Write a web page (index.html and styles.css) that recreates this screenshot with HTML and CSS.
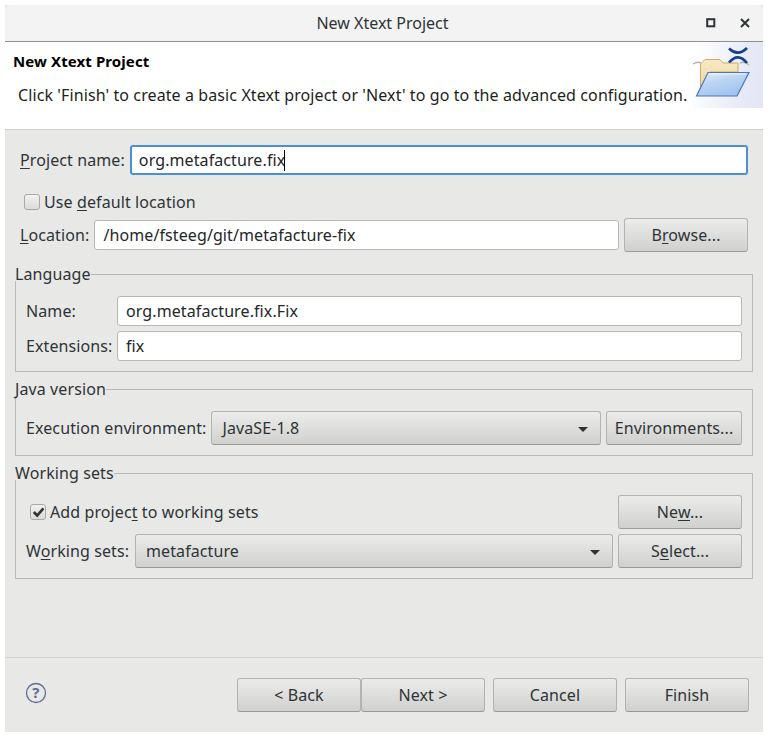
FILE: index.html
```html
<!DOCTYPE html>
<html lang="en">
<head>
    <meta charset="UTF-8">
    <meta name="viewport" content="width=device-width, initial-scale=1.0">
    <title>New Xtext Project</title>
    <link rel="stylesheet" href="styles.css">
</head>
<body>
    <div class="window">
        <div class="titlebar">
            <span class="title">New Xtext Project</span>
            <div class="window-buttons">
                <svg width="10" height="10" viewBox="0 0 10 10"><rect x="1.2" y="1.2" width="7.1" height="7.1" fill="none" stroke="#2e3436" stroke-width="2"/></svg>
                <svg width="10" height="10" viewBox="0 0 10 10"><path d="M1 1L9 9M9 1L1 9" fill="none" stroke="#2e3436" stroke-width="2"/></svg>
            </div>
        </div>

        <div class="banner">
            <div class="banner-text">
                <h1>New Xtext Project</h1>
                <p>Click 'Finish' to create a basic Xtext project or 'Next' to go to the advanced configuration.</p>
            </div>
            <div class="banner-image">
                <svg width="70" height="65" viewBox="0 0 70 65">
                    <defs>
                        <linearGradient id="back" x1="0" y1="0" x2="0" y2="1">
                            <stop offset="0" stop-color="#f7e9c4"/>
                            <stop offset="1" stop-color="#ecd595"/>
                        </linearGradient>
                        <linearGradient id="front" x1="0" y1="0" x2="0.6" y2="1">
                            <stop offset="0" stop-color="#e6effb"/>
                            <stop offset="0.45" stop-color="#bdd5f4"/>
                            <stop offset="1" stop-color="#a0c2ee"/>
                        </linearGradient>
                    </defs>
                    <path d="M0 22Q4 19 8 21M47 21Q52 19 56 23" fill="none" stroke="#b4b4b8" stroke-width="1.4"/>
                    <path d="M7.5 52V22L12 17.5H27L30 21H45V30H17Z" fill="url(#back)" stroke="#c9ad6a"/>
                    <path d="M15 30.500H56L44 54H3.500Z" fill="url(#front)" stroke="#5074b8" stroke-width="1.200"/>
                    <path d="M16 32H53" fill="none" stroke="#fff" stroke-opacity="0.8"/>
                    <path d="M36 6.500Q45 15 54 6M36 20.500Q45 10 54 21" fill="none" stroke="#16408e" stroke-width="2.600"/>
                </svg>
            </div>
        </div>

        <div class="content">
            <div class="row project-row">
                <label class="label"><u>P</u>roject name:</label>
                <div class="field focused">org.metafacture.fix<span class="caret"></span></div>
            </div>

            <label class="check default-location"><span class="box"></span><span>Use <u>d</u>efault location</span></label>

            <div class="row location-row">
                <label class="label"><u>L</u>ocation:</label>
                <div class="field">/home/fsteeg/git/metafacture-fix</div>
                <button class="btn">B<u>r</u>owse...</button>
            </div>

            <fieldset class="group language">
                <legend>Language</legend>
                <div class="row">
                    <label class="label name-label">Name:</label>
                    <div class="field">org.metafacture.fix.Fix</div>
                </div>
                <div class="row">
                    <label class="label name-label">Extensions:</label>
                    <div class="field">fix</div>
                </div>
            </fieldset>

            <fieldset class="group java">
                <legend>Java version</legend>
                <div class="row">
                    <label class="label">Execution environment:</label>
                    <div class="combo">JavaSE-1.8<span class="arrow"></span></div>
                    <button class="btn env">Environments...</button>
                </div>
            </fieldset>

            <fieldset class="group working">
                <legend>Working sets</legend>
                <div class="row add-row">
                    <label class="check"><span class="box">
                        <svg width="14" height="14" viewBox="0 0 14 14"><path d="M2.800 7L6.200 10.500L12.400 3.300" fill="none" stroke="#2e3436" stroke-width="2.600"/></svg>
                    </span><span>Add projec<u>t</u> to working sets</span></label>
                    <button class="btn">Ne<u>w</u>...</button>
                </div>
                <div class="row">
                    <label class="label sets-label">W<u>o</u>rking sets:</label>
                    <div class="combo">metafacture<span class="arrow"></span></div>
                    <button class="btn">S<u>e</u>lect...</button>
                </div>
            </fieldset>
        </div>

        <div class="footer">
            <svg class="help" width="22" height="22" viewBox="0 0 22 22">
                <circle cx="11" cy="11" r="9.500" fill="none" stroke="#5c6f94" stroke-width="1.300"/>
                <text x="11" y="16" text-anchor="middle" class="help-mark">?</text>
            </svg>
            <div class="nav">
                <button class="btn">&lt; Back</button>
                <button class="btn">Next &gt;</button>
                <button class="btn cancel">Cancel</button>
                <button class="btn finish">Finish</button>
            </div>
        </div>
    </div>
</body>
</html>
```

FILE: styles.css
```css
* {
    box-sizing: border-box;
}
html, body {
    height: 100%;
}
body {
    margin: 0;
    background-color: #fff;
    font-family: "Noto Sans", sans-serif;
    font-size: 16px;
    letter-spacing: 0.1px;
    color: #2e3436;
    overflow: hidden;
}
u {
    text-underline-offset: 2px;
    text-decoration-thickness: 1px;
}
.window {
    margin: 5px 0 0 5px;
    width: 758px;
    height: 727px;
    background-color: #e8e8e7;
    display: flex;
    flex-direction: column;
}

/* title bar */
.titlebar {
    height: 37px;
    flex: none;
    position: relative;
    display: flex;
    align-items: center;
    justify-content: center;
    padding-right: 3px;
    letter-spacing: 0;
    background-color: #f3f3f3;
    border-bottom: 1px solid #8f8f8c;
    border-radius: 6px 6px 0 0;
}
.window-buttons {
    position: absolute;
    right: 13px;
    top: 13px;
    display: flex;
    gap: 24px;
}
.window-buttons svg {
    display: block;
}

/* white banner */
.banner {
    height: 88px;
    flex: none;
    background-color: #fff;
    border-bottom: 1px solid #cfcfcd;
    display: flex;
    justify-content: space-between;
}
.banner-text {
    padding: 9px 0 0 8px;
}
.banner h1 {
    margin: 0;
    font-size: 15px;
    line-height: 20px;
    font-weight: 700;
    color: #000;
}
.banner p {
    margin: 14px 0 0 5px;
    line-height: 20px;
    color: #1c1f20;
    white-space: nowrap;
}
.banner-image {
    width: 70px;
    height: 66px;
    background: linear-gradient(100deg, #fff 5%, #e6e9f6 75%, #e2e6f5 100%);
}
.banner-image svg {
    display: block;
}

/* form area */
.content {
    flex: 1;
    padding: 15px 10px 0;
}
.row {
    display: flex;
    align-items: center;
    gap: 5px;
}
.label {
    white-space: nowrap;
}
.field {
    flex: 1;
    height: 30px;
    padding: 0 8px;
    line-height: 28px;
    background-color: #fff;
    border: 1px solid #b8b8b6;
    border-radius: 3px;
    white-space: nowrap;
    color: #23272a;
}
.field.focused {
    border: 2px solid #4a90d9;
    padding: 0 7px;
    line-height: 26px;
}
.caret {
    display: inline-block;
    width: 1px;
    height: 21px;
    margin-left: -1px;
    vertical-align: -5px;
    background-color: #000;
}
.project-row {
    padding-left: 5px;
    padding-right: 5px;
}
.check {
    display: flex;
    align-items: center;
    gap: 4px;
    white-space: nowrap;
}
.box {
    width: 16px;
    height: 16px;
    flex: none;
    display: flex;
    align-items: center;
    justify-content: center;
    border: 1px solid #a9a9a7;
    border-radius: 3px;
    background: linear-gradient(#f1f1f0, #dcdcda);
}
.default-location {
    margin: 17px 0 0 9px;
    height: 20px;
}
.location-row {
    margin: 6px 5px 0;
    height: 34px;
}
.btn {
    height: 34px;
    width: 124px;
    flex: none;
    padding: 0;
    font: inherit;
    letter-spacing: inherit;
    color: inherit;
    border: 1px solid #b3b3b1;
    border-bottom-color: #9a9a98;
    border-radius: 3px;
    background: linear-gradient(#ececeb, #d0d0ce);
}
.btn.env {
    width: 136px;
}
.combo {
    flex: 1;
    height: 34px;
    padding: 0 10px;
    line-height: 32px;
    position: relative;
    border: 1px solid #b3b3b1;
    border-bottom-color: #9a9a98;
    border-radius: 3px;
    background: linear-gradient(#ececeb, #d0d0ce);
}
.arrow {
    position: absolute;
    right: 12px;
    top: 15px;
    border-left: 5px solid transparent;
    border-right: 5px solid transparent;
    border-top: 5px solid #2e3436;
}

/* group boxes */
.group {
    margin: 0;
    min-width: 0;
    border: 1px solid #b9b9b7;
    padding: 0 10px;
}
.group legend {
    margin-left: -11px;
    padding: 0;
    height: 14px;
    line-height: 14px;
    background-color: #e8e8e7;
}
.language {
    margin-top: 15px;
    height: 105px;
    padding-top: 15px;
    display: flex;
    flex-direction: column;
    gap: 5px;
}
.name-label {
    width: 91px;
    flex: none;
    margin-right: -5px;
    padding-right: 5px;
}
.sets-label {
    width: 104px;
    flex: none;
}
.java {
    margin-top: 10px;
    height: 74px;
    padding-top: 15px;
}
.working {
    margin-top: 10px;
    height: 113px;
    padding-top: 15px;
    display: flex;
    flex-direction: column;
    gap: 5px;
}
.add-row {
    justify-content: space-between;
    padding-left: 4px;
}

/* bottom buttons */
.footer {
    height: 75px;
    flex: none;
    border-top: 1px solid #d3d3d1;
    padding: 20px 14px 0 20px;
    display: flex;
    justify-content: space-between;
}
.help {
    margin-top: 4px;
}
.help-mark {
    font-family: "Noto Sans", sans-serif;
    font-size: 15px;
    font-weight: 700;
    fill: #5c6f94;
}
.nav {
    display: flex;
}
.cancel, .finish {
    margin-left: 8px;
}
```
